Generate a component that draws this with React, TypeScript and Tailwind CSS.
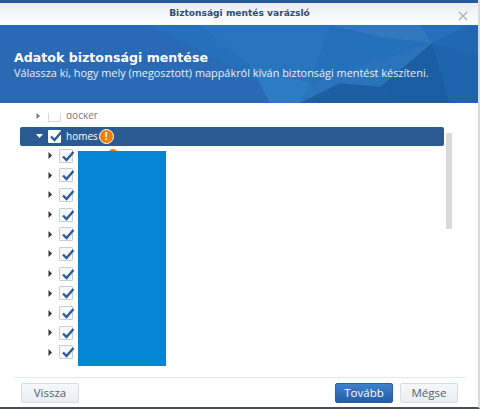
import React from "react";

const Check = ({ big }: { big?: boolean }) => (
  <span className={big ? "relative flex h-[13px] w-[13px] shrink-0 items-center justify-center rounded-[1px] bg-white" : "relative flex h-[14px] w-[14px] shrink-0 items-center justify-center rounded-[1px] border border-[#c9ced6] bg-[#f7f8fa]"}>
    <svg width="16" height="14" viewBox="0 0 16 14" className="absolute left-[0px] top-[-1px]">
      <path d="M3 7.5 L6.5 11 L13.5 3" fill="none" stroke="#2b5c98" strokeWidth="2.4" />
    </svg>
  </span>
);

const Row = () => (
  <div className="flex h-[19.7px] items-center pl-[48px]">
    <svg width="4" height="7" viewBox="0 0 4 7" className="mr-[7px]"><path d="M0.5 0 L4 3.5 L0.5 7 Z" fill="#333" /></svg>
    <Check />
  </div>
);

const Button = ({ label, primary }: { label: string; primary?: boolean }) => (
  <button className={primary
    ? "h-[20px] w-[58px] rounded-[2px] border border-[#2a5fa5] bg-gradient-to-b from-[#3f80cb] to-[#255ea8] text-[11.5px] text-white"
    : "h-[20px] w-[58px] rounded-[2px] border border-[#d5dce5] bg-gradient-to-b from-[#f6f8fb] to-[#e9eef4] text-[11.5px] text-[#4f5f70]"}>
    {label}
  </button>
);

export default function App() {
  return (
    <div className="flex h-[409px] w-[480px] flex-col overflow-hidden border-r-2 border-b-2 border-r-[#d9dbde] border-b-[#4a4f55] bg-white font-['Open_Sans','Liberation_Sans',sans-serif]">
      <div className="h-[3px] shrink-0 bg-[#26569c]" />
      <div className="relative flex h-[22px] shrink-0 items-center justify-center bg-gradient-to-b from-[#e9edf2] to-[#ffffff] font-['DejaVu_Sans',sans-serif] text-[9.1px] font-bold text-[#2f4d74]">
        <span className="pl-[1px]">Biztonsági mentés varázsló</span>
        <svg width="10" height="10" viewBox="0 0 10 10" className="absolute left-[458px] top-[8px]">
          <path d="M1 1 L9 9 M9 1 L1 9" stroke="#a9b0b8" strokeWidth="1.3" />
        </svg>
      </div>
      <div className="relative h-[78px] shrink-0 overflow-hidden bg-[#2a69b3]">
        <svg width="480" height="78" viewBox="0 0 480 78" className="absolute inset-0">
          <polygon points="150,0 480,0 480,78 300,78" fill="#2570ba" />
          <polygon points="380,12 432,18 420,0 330,0" fill="#3178bd" />
          <polygon points="432,18 470,0 480,0 480,20 478,30" fill="#2069b2" />
          <polygon points="432,18 480,30 480,78 450,78" fill="#1f64ac" />
          <polygon points="432,18 450,78 400,78 380,62" fill="#1c5ea4" />
          <polygon points="432,18 380,62 300,78 310,58" fill="#2a74bb" />
          <polygon points="340,58 380,62 400,78 300,78" fill="#1e5fa3" />
          <polygon points="200,0 330,0 310,58 250,40" fill="#2874bd" />
          <polygon points="250,40 310,58 300,78 270,78" fill="#2c7bc4" />
        </svg>
        <div className="relative pl-[14px] pt-[25px]">
          <div className="font-['DejaVu_Sans',sans-serif] text-[12.6px] font-bold leading-[16px] text-white">Adatok biztonsági mentése</div>
          <div className="mt-[-1px] whitespace-nowrap text-[10.9px] leading-[16px] text-[#eaf1f8]">Válassza ki, hogy mely (megosztott) mappákról kíván biztonsági mentést készíteni.</div>
        </div>
      </div>
      <div className="relative min-h-0 flex-1 overflow-hidden pt-[3px]">
        <div className="flex h-[19.7px] items-center pl-[36px]">
          <svg width="4" height="6" viewBox="0 0 4 6" className="mr-[8px]"><path d="M0.5 0 L4 3 L0.5 6 Z" fill="#777" /></svg>
          <span className="h-[13px] w-[13px] border border-[#d5d8dd] bg-white" />
          <span className="ml-[5px] text-[10px] text-[#777]">docker</span>
        </div>
        <div className="absolute left-0 top-0 h-[10px] w-full bg-white" />
        <div className="ml-[20px] mr-[34px] mt-[1px] flex h-[19px] items-center rounded-[2px] bg-[#2a5a92] pl-[16px]">
          <svg width="7" height="4" viewBox="0 0 7 4" className="mr-[5px]"><path d="M0 0 H7 L3.5 4 Z" fill="#fff" /></svg>
          <Check big />
          <span className="ml-[5px] text-[10px] text-white">homes</span>
          <span className="ml-[1px] flex h-[15px] w-[15px] items-center justify-center rounded-full border border-white bg-[#ee7d0e] text-[10px] font-bold leading-none text-white">!</span>
        </div>
        {Array.from({ length: 11 }).map((_, i) => <Row key={i} />)}
        <div className="absolute left-[446px] top-[30px] h-[96px] w-[6px] bg-[#d9d9d9]" />
        <div className="absolute left-[109px] top-[46px] h-[8px] w-[8px] rounded-full bg-[#ee7d0e]" />
        <div className="absolute left-[78px] top-[48px] h-[215px] w-[88px] bg-[#0585d5]" />
      </div>
      <div className="ml-[14px] mr-[12px] flex h-[30px] shrink-0 items-start justify-between border-t border-[#e6e8ea] pt-[5px] pl-[7px] pr-[8px]">
        <Button label="Vissza" />
        <div className="flex gap-[7px]">
          <Button label="Tovább" primary />
          <Button label="Mégse" />
        </div>
      </div>
    </div>
  );
}
